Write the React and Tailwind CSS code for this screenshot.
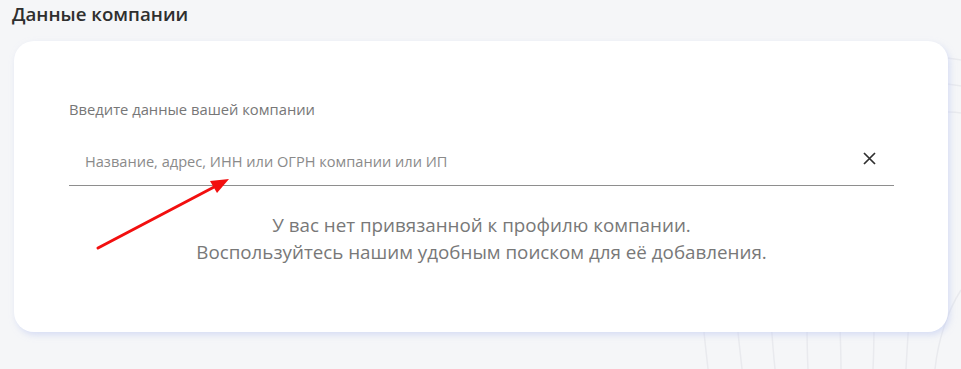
export default function App() {
  return (
    <div className="relative w-[961px] h-[369px] overflow-hidden bg-[#f5f6f8] font-['Open_Sans',sans-serif]">
      <svg className="absolute inset-0" width="961" height="369" viewBox="0 0 961 369" fill="none">
        <g stroke="#e9eaee" strokeWidth="1.5">
          <path d="M708 369 C 706 350, 704 335, 703 320" />
          <path d="M742 369 C 740 350, 738 335, 737 320" />
          <path d="M775 369 C 773 350, 772 335, 771 320" />
          <path d="M808 369 C 807 350, 807 335, 807 320" />
          <path d="M841 369 C 841 350, 840 335, 840 320" />
          <path d="M873 369 C 874 350, 874 335, 874 320" />
          <path d="M906 369 C 907 350, 908 335, 909 320" />
          <path d="M935 369 C 938 340, 948 310, 961 290" />
          <path d="M948 58 C 952 59, 956 59, 961 60" />
          <path d="M948 84 C 952 85, 956 85, 961 86" />
          <path d="M948 112 C 952 112, 956 112, 961 113" />
        </g>
      </svg>
      <div className="relative">
        <h2 className="pl-[12px] pt-[1px] h-[41px] text-[18.7px] leading-[26px] font-semibold text-[#2f2f2f]">
          Данные компании
        </h2>
        <div className="ml-[14px] w-[934px] h-[291px] rounded-[20px] bg-white shadow-[2px_3px_6px_rgba(190,200,240,0.55)] pl-[55px] pr-[54px] pt-[58px]">
          <div className="text-[14.75px] leading-[20px] text-[#777777]">Введите данные вашей компании</div>
          <div className="mt-[29px] flex items-center h-[38px] border-b border-[#8e8e8e] pl-[16px] pr-[18px]">
            <span className="flex-1 text-[14.6px] leading-[20px] text-[#8a8a8a] mt-[-11px]">
              Название, адрес, ИНН или ОГРН компании или ИП
            </span>
            <svg width="13" height="13" viewBox="0 0 13 13" className="mt-[-16px]">
              <path d="M1 1 L12 12 M12 1 L1 12" stroke="#2f2f2f" strokeWidth="1.7" />
            </svg>
          </div>
          <div className="mt-[26px] text-center text-[18.8px] leading-[27px] text-[#787878]">
            <p>У вас нет привязанной к профилю компании.</p>
            <p>Воспользуйтесь нашим удобным поиском для её добавления.</p>
          </div>
        </div>
      </div>
      <svg className="absolute left-0 top-0 pointer-events-none" width="961" height="369" viewBox="0 0 961 369" fill="none">
        <path d="M98 248 L216 186" stroke="#f20f0f" strokeWidth="3" strokeLinecap="round" />
        <path d="M229 179 L210 181 L217 193 Z" fill="#f20f0f" />
      </svg>
    </div>
  );
}
